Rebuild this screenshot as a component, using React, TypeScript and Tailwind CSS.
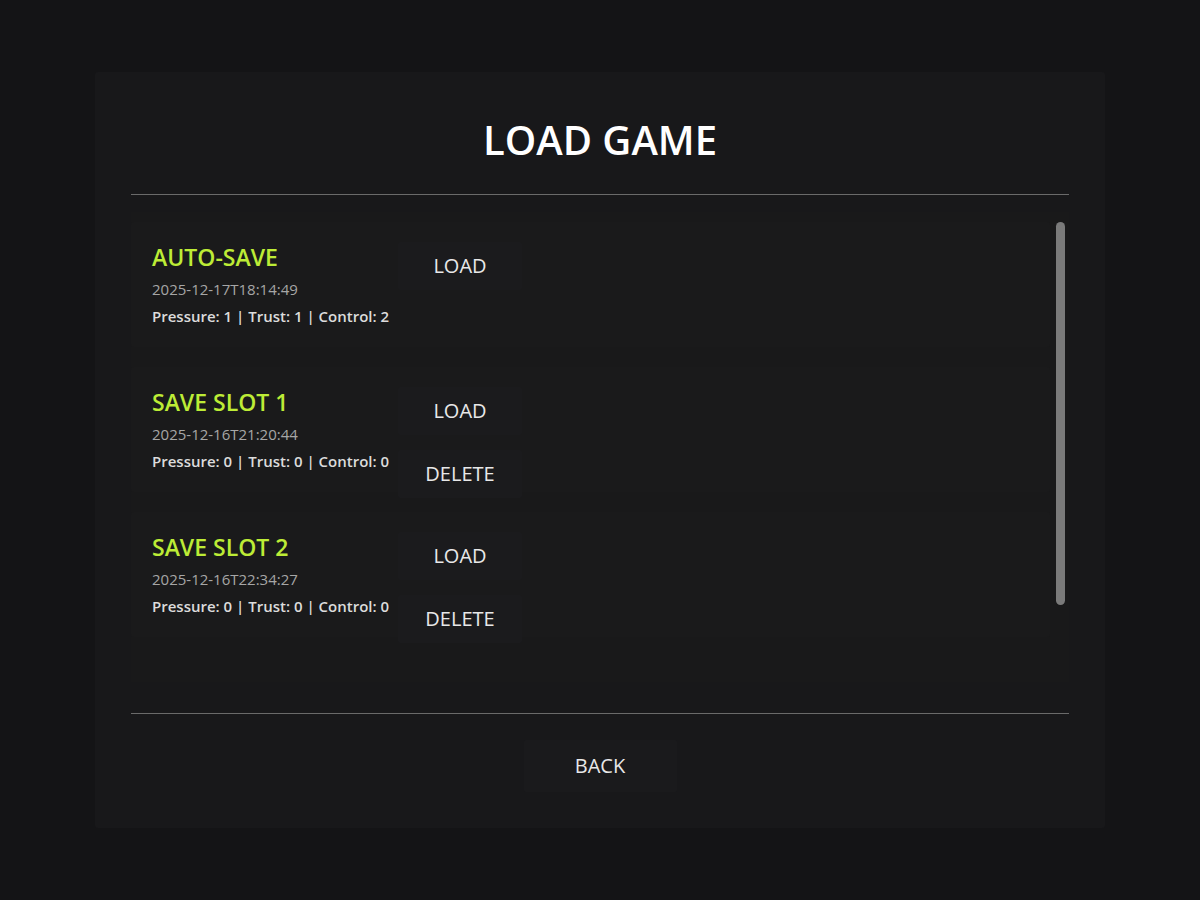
import React from "react";

type Slot = { name: string; date: string; stats: string; canDelete: boolean };

const slots: Slot[] = [
  { name: "AUTO-SAVE", date: "2025-12-17T18:14:49", stats: "Pressure: 1 | Trust: 1 | Control: 2", canDelete: false },
  { name: "SAVE SLOT 1", date: "2025-12-16T21:20:44", stats: "Pressure: 0 | Trust: 0 | Control: 0", canDelete: true },
  { name: "SAVE SLOT 2", date: "2025-12-16T22:34:27", stats: "Pressure: 0 | Trust: 0 | Control: 0", canDelete: true },
];

function Btn({ label }: { label: string }) {
  return (
    <button className="w-[124px] h-[48px] bg-[#1b1b1d] text-[#e8e8e8] text-[20px] font-medium rounded-[2px] flex items-center justify-center">
      {label}
    </button>
  );
}

export default function App() {
  return (
    <div
      className="w-full h-screen bg-[#141416] flex items-center justify-center"
      style={{ fontFamily: '"Open Sans", "Noto Sans", sans-serif' }}
    >
      <div className="w-[1010px] h-[756px] bg-[#18181a] rounded-[3px] px-[36px] pt-[39px] flex flex-col">
        <h1 className="text-center text-white text-[40px] font-semibold leading-[58px]">LOAD GAME</h1>
        <div className="mt-[25px] h-px bg-[#6a6a6a]" />
        <div className="mt-[17px] h-[470px] bg-[#19191a] flex pt-[10px] overflow-hidden">
          <div className="flex-1 flex flex-col gap-[20px]">
            {slots.map((s) => (
              <div key={s.name} className="h-[125px] shrink-0 bg-[#1a1a1b] rounded-[3px] pl-[21px] pt-[20px] flex items-start gap-[7px]">
                <div className="flex flex-col w-[239px]">
                  <div className="text-[#bdec36] text-[23px] font-semibold leading-[30px]">{s.name}</div>
                  <div className="text-[#a6a6a6] text-[15px] leading-[20px] mt-[7px] whitespace-nowrap">{s.date}</div>
                  <div className="text-[#dcdcdc] text-[15px] font-semibold leading-[20px] mt-[7px] whitespace-nowrap">{s.stats}</div>
                </div>
                <div className="flex flex-col gap-[15px]">
                  <Btn label="LOAD" />
                  {s.canDelete && <Btn label="DELETE" />}
                </div>
              </div>
            ))}
          </div>
          <div className="w-[11px] ml-[6px] mr-[2px] flex flex-col">
            <div className="h-[383px] w-[9px] rounded-full bg-[#7a7a7a]" />
          </div>
        </div>
        <div className="mt-[31px] h-px bg-[#6a6a6a]" />
        <div className="mt-[26px] flex justify-center">
          <button className="w-[153px] h-[52px] bg-[#1a1a1c] text-[#e8e8e8] text-[20px] font-medium rounded-[2px]">BACK</button>
        </div>
      </div>
    </div>
  );
}
